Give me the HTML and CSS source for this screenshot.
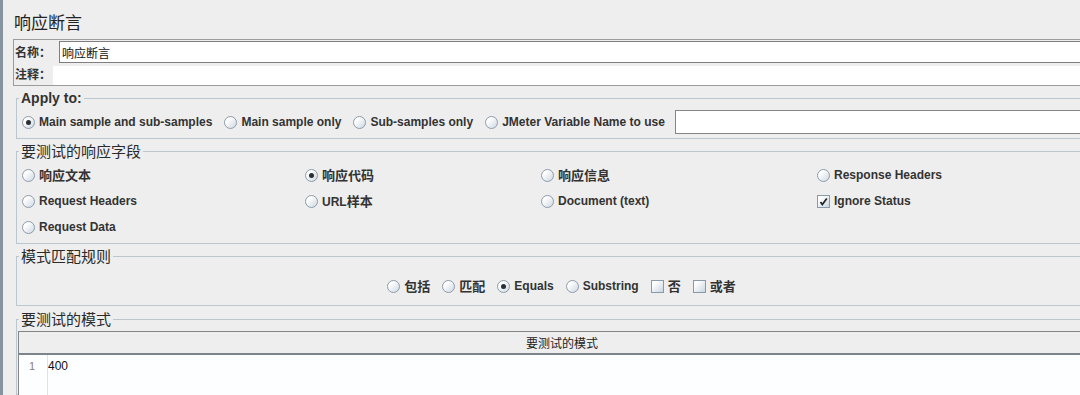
FILE: index.html
```html
<!DOCTYPE html>
<html lang="zh-CN">
<head>
  <meta charset="UTF-8" />
  <title>响应断言</title>
  <link rel="stylesheet" href="styles.css">
</head>
<body>
  <div class="panel">
    <h1 class="title">响应断言</h1>

    <div class="namebox">
      <div class="field-row">
        <span class="field-label">名称：</span>
        <input class="name-input" type="text" value="响应断言">
      </div>
      <div class="field-row">
        <span class="field-label">注释：</span>
        <input class="comment-input" type="text" value="">
      </div>
    </div>

    <fieldset class="group apply">
      <legend class="legend-en">Apply to:</legend>
      <div class="apply-row">
        <label class="opt"><span class="radio on"></span>Main sample and sub-samples</label>
        <label class="opt"><span class="radio"></span>Main sample only</label>
        <label class="opt"><span class="radio"></span>Sub-samples only</label>
        <label class="opt"><span class="radio"></span>JMeter Variable Name to use</label>
        <input class="var-input" type="text" value="">
      </div>
    </fieldset>

    <fieldset class="group fields">
      <legend class="legend-cn">要测试的响应字段</legend>
      <div class="field-grid">
        <label class="opt"><span class="radio"></span><span class="cjk">响应文本</span></label>
        <label class="opt"><span class="radio on"></span><span class="cjk">响应代码</span></label>
        <label class="opt"><span class="radio"></span><span class="cjk">响应信息</span></label>
        <label class="opt"><span class="radio"></span>Response Headers</label>
        <label class="opt"><span class="radio"></span>Request Headers</label>
        <label class="opt"><span class="radio"></span><span>URL<span class="cjk">样本</span></span></label>
        <label class="opt"><span class="radio"></span>Document (text)</label>
        <label class="opt"><span class="check on"><svg width="11" height="11" viewBox="0 0 11 11"><path d="M2.5 6 L4.3 8.6 L8.8 2.4" fill="none" stroke="#1e2328" stroke-width="1.7"/></svg></span>Ignore Status</label>
        <label class="opt"><span class="radio"></span>Request Data</label>
      </div>
    </fieldset>

    <fieldset class="group rules">
      <legend class="legend-cn">模式匹配规则</legend>
      <div class="rule-row">
        <label class="opt"><span class="radio"></span><span class="cjk">包括</span></label>
        <label class="opt"><span class="radio"></span><span class="cjk">匹配</span></label>
        <label class="opt"><span class="radio on"></span>Equals</label>
        <label class="opt"><span class="radio"></span>Substring</label>
        <label class="opt"><span class="check"></span><span class="cjk">否</span></label>
        <label class="opt"><span class="check"></span><span class="cjk">或者</span></label>
      </div>
    </fieldset>

    <fieldset class="group patterns">
      <legend class="legend-cn">要测试的模式</legend>
      <div class="pattern-table">
        <div class="pattern-head">要测试的模式</div>
        <div class="editor">
          <div class="gutter">1</div>
          <div class="code">400</div>
        </div>
      </div>
    </fieldset>
  </div>
</body>
</html>
```

FILE: styles.css
```css
body {
  margin: 0;
  background: #eeeeee;
  overflow: hidden;
  font-family: "Liberation Sans", "Noto Sans CJK SC", sans-serif;
  color: #333;
}
.panel {
  width: 1107px;
  height: 395px;
  overflow: hidden;
  border-left: 3px solid #8893a0;
}
.title {
  margin: 12px 0 0 11px;
  font-family: "Noto Sans CJK SC", sans-serif;
  font-size: 17px;
  line-height: 20px;
  font-weight: normal;
  color: #222;
}

/* name / comment box */
.namebox {
  margin: 7px 0 0 10px;
  padding: 1px 0 0 1px;
  border: 1px solid #9c9c9c;
  border-right: none;
}
.field-row {
  display: flex;
  align-items: center;
}
.field-label {
  width: 36px;
  font-size: 12px;
  line-height: 16px;
  font-weight: bold;
  font-family: "Noto Sans CJK SC", sans-serif;
}
.name-input {
  flex: 1;
  height: 22px;
  margin-left: 8px;
  padding: 0 2px;
  box-sizing: border-box;
  border: 1px solid #7f7f7f;
  background: #fff;
  font-family: "Noto Sans CJK SC", sans-serif;
  font-size: 12px;
  color: #111;
  outline: none;
}
.comment-input {
  flex: 1;
  height: 19px;
  margin: 3px 0 0 2px;
  padding: 0;
  box-sizing: border-box;
  border: none;
  background: #fff;
  outline: none;
}

/* titled groups */
.group {
  margin: 3px 3px 0 13px;
  padding: 0 0 0 5px;
  border: 1px solid #bcc6cf;
  min-width: 0;
}
.group legend {
  margin-left: -3px;
  padding: 0 2px;
}
.legend-en {
  font-size: 14px;
  line-height: 16px;
  font-weight: bold;
}
.legend-cn {
  font-family: "Noto Sans CJK SC", sans-serif;
  font-size: 15px;
  line-height: 18px;
  color: #2a2a2a;
}
.apply {
  margin-top: 4px;
  padding-top: 4px;
  padding-bottom: 4px;
}
.fields {
  padding-top: 2px;
  padding-bottom: 3px;
}
.rules {
  padding: 11px 0 9px 0;
}
.rules legend {
  margin-left: 2px;
}
.patterns {
  margin-top: 4px;
  padding: 3px 1px 0 1px;
  height: 80px;
}
.patterns legend {
  margin-left: 1px;
}

/* options */
.opt {
  display: inline-flex;
  align-items: center;
  gap: 4px;
  font-size: 12px;
  line-height: 16px;
  font-weight: bold;
  white-space: nowrap;
  color: #333;
}
.cjk {
  font-family: "Noto Sans CJK SC", sans-serif;
  font-size: 13px;
}
.radio {
  width: 13px;
  height: 13px;
  box-sizing: border-box;
  border: 1px solid #8c9cab;
  border-radius: 50%;
  background: linear-gradient(135deg, #ffffff 25%, #cfd8e2);
  display: inline-flex;
  align-items: center;
  justify-content: center;
}
.radio.on::after {
  content: "";
  width: 5px;
  height: 5px;
  border-radius: 50%;
  background: #2b2f33;
}
.check {
  width: 13px;
  height: 13px;
  box-sizing: border-box;
  border: 1px solid #8a99a8;
  background: linear-gradient(135deg, #ffffff 20%, #c9d5e1);
  display: inline-flex;
  align-items: center;
  justify-content: center;
}
.check svg {
  display: block;
}

.apply-row {
  display: flex;
  align-items: center;
  gap: 12px;
  height: 24px;
}
.var-input {
  flex: 1;
  height: 24px;
  margin-left: -2px;
  box-sizing: border-box;
  border: 1px solid #858585;
  background: #fff;
  outline: none;
}
.field-grid {
  display: grid;
  grid-template-columns: 283px 236px 276px 1fr;
  grid-auto-rows: 26px;
  align-items: center;
}
.rule-row {
  display: flex;
  justify-content: center;
  align-items: center;
  gap: 12px;
  height: 20px;
}

/* pattern table */
.pattern-table {
  border: 1px solid #858585;
  border-right: none;
  border-bottom: none;
  height: 100px;
}
.pattern-head {
  height: 21px;
  line-height: 21px;
  text-align: center;
  font-family: "Noto Sans CJK SC", sans-serif;
  font-size: 12px;
  color: #222;
  border-bottom: 2px solid #7c858e;
  background: #eeeeee;
}
.editor {
  display: flex;
  height: 80px;
  background: #fdfeff;
}
.gutter {
  width: 26px;
  padding-right: 2px;
  border-right: 1px solid #e2e2e2;
  padding-top: 4px;
  text-align: center;
  font-size: 11px;
  line-height: 15px;
  color: #8d7b70;
}
.code {
  padding-top: 4px;
  font-size: 12px;
  line-height: 15px;
  color: #111;
}
```
